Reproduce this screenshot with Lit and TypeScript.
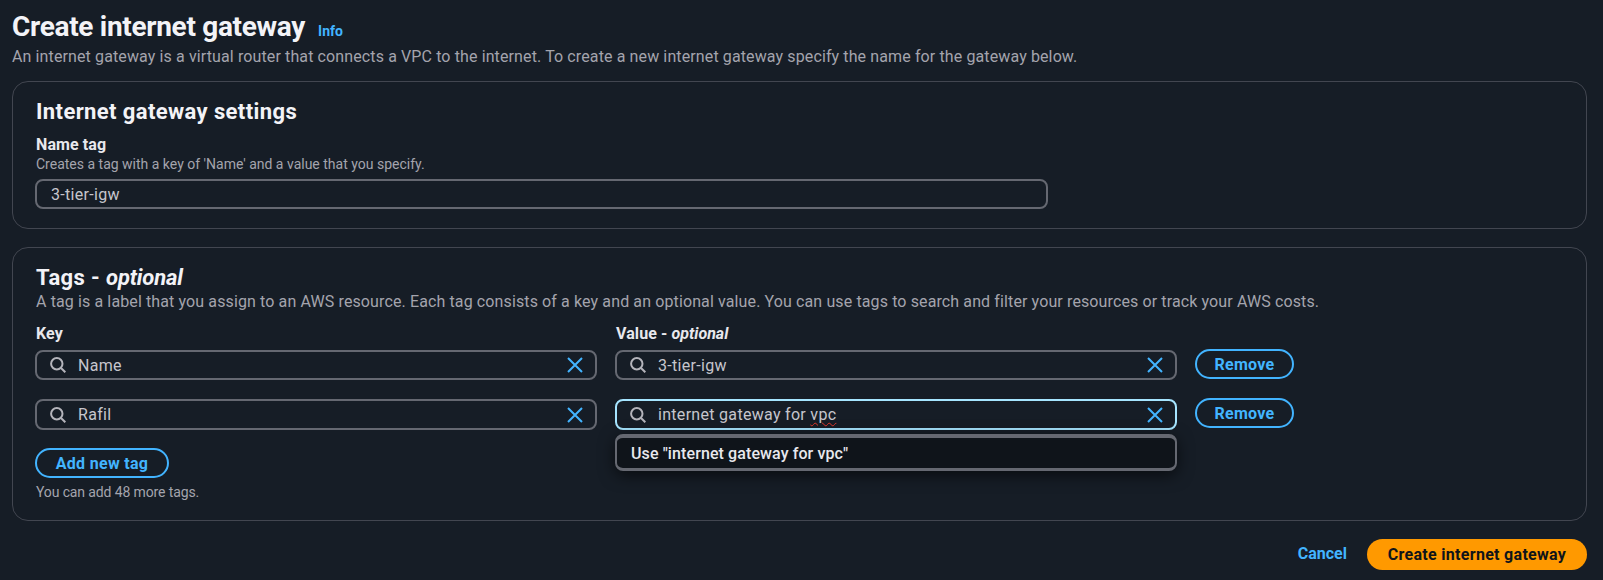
import { LitElement, html, css } from "lit";
import { customElement } from "lit/decorators.js";

const searchIcon = html`<svg class="search" viewBox="0 0 16 16" width="16" height="16" fill="none" stroke="#b4b4bb" stroke-width="2"><circle cx="6.8" cy="6.8" r="5.7"></circle><path d="M11 11l4.3 4.3"></path></svg>`;
const clearIcon = html`<svg class="clear" viewBox="0 0 16 16" width="16" height="16" fill="none" stroke="#42b4ff" stroke-width="2"><path d="M1 1l14 14M15 1L1 15"></path></svg>`;

@customElement("app-root")
export class AppRoot extends LitElement {
  static styles = css`
    :host {
      display: block;
      width: 1603px;
      height: 580px;
      overflow: hidden;
      background: #161d26;
      box-sizing: border-box;
      padding: 0 16px 0 12px;
      font-family: Roboto, "Noto Sans", sans-serif;
      font-size: 16px;
      color: #c6c6cd;
    }
    .title-row { display: flex; align-items: flex-start; height: 48px; padding-top: 10px; box-sizing: border-box; }
    h1 { margin: 0; font-size: 28px; line-height: 34px; font-weight: 700; color: #f3f3f7; letter-spacing: -0.31px; }
    .info { margin: 13px 0 0 13px; font-size: 14px; font-weight: 700; color: #42b4ff; }
    .desc { line-height: 18px; height: 18px; color: #a4a4ad; letter-spacing: 0.117px; white-space: nowrap; }
    .card {
      box-sizing: border-box;
      border: 1px solid #424650;
      border-radius: 16px;
      padding: 0 23px;
    }
    .settings { height: 148px; margin-top: 15px; padding-top: 18px; }
    .tags { height: 274px; margin-top: 18px; padding-top: 18px; }
    h2 { margin: 0; font-size: 22px; line-height: 24px; font-weight: 700; color: #f3f3f7; letter-spacing: 0.39px; }
    h2 em { font-weight: 700; font-style: italic; letter-spacing: -0.15px; }
    label em { font-weight: 700; font-style: italic; letter-spacing: 0; }
    label { display: block; font-size: 16px; line-height: 18px; font-weight: 700; color: #e8e8ed; letter-spacing: 0.1px; }
    .small { font-size: 14px; line-height: 16px; color: #a4a4ad; white-space: nowrap; }
    .settings label { margin-top: 12px; }
    .settings .small { margin-top: 2px; }
    .field {
      box-sizing: border-box;
      height: 30px;
      border: 2px solid #656871;
      border-radius: 8px;
      display: flex;
      align-items: center;
      color: #c6c6cd;
      font-size: 16px;
      letter-spacing: 0.3px;
      background: #161d26;
    }
    .plain { width: 1013px; margin: 7px 0 0 -1px; padding-left: 14px; }
    .tags .desc { margin-top: 3px; }
    .grid {
      display: grid;
      grid-template-columns: 562px 562px auto;
      column-gap: 18px;
      margin: 14px 0 0 -1px;
      justify-content: start;
      align-items: start;
    }
    .grid .rm { margin: -1px 0 0 0; }
    .head { height: 18px; margin: 0 0 7px 1px; }
    .row-gap { grid-column: 1 / -1; height: 19px; }
    .search-field { padding: 0 12px 0 13px; position: relative; }
    .search-field .value { margin-left: 12px; flex: 1; }
    .search { flex: none; }
    .clear { flex: none; }
    .tall { height: 31px; }
    .focus { border-color: #a6e5ff; color: #c6c6cd; position: relative; }
    .spell { text-decoration: underline wavy #e0362c 1px; text-underline-offset: 2px; }
    .cell { position: relative; }
    .menu {
      position: absolute;
      left: 0;
      right: 0;
      top: 35px;
      height: 37px;
      box-sizing: border-box;
      border: 2px solid #656871;
      border-top-width: 4px;
      border-bottom-width: 3px;
      border-radius: 8px;
      background: #0f141a;
      color: #e8e8ed;
      font-weight: 500;
      font-size: 16px;
      letter-spacing: 0.1px;
      padding-left: 14px;
      display: flex;
      align-items: center;
      box-shadow: 0 4px 16px rgba(0, 0, 0, 0.6);
      z-index: 2;
    }
    .btn {
      box-sizing: border-box;
      display: inline-flex;
      align-items: center;
      justify-content: center;
      height: 30px;
      border: 2px solid #42b4ff;
      border-radius: 20px;
      color: #42b4ff;
      font-weight: 700;
      font-size: 16px;
      letter-spacing: 0.3px;
    }
    .rm { width: 99px; }
    .add { width: 134px; margin: 18px 0 0 -1px; }
    .tags .small { margin-top: 6px; letter-spacing: -0.12px; }
    .footer {
      display: flex;
      justify-content: flex-end;
      align-items: center;
      margin-top: 18px;
    }
    .cancel { color: #42b4ff; font-weight: 700; margin-right: 20px; padding-bottom: 2px; }
    .primary {
      box-sizing: border-box;
      width: 220px;
      height: 31px;
      padding-bottom: 1px;
      border-radius: 20px;
      background: #ff9900;
      color: #0f141a;
      font-weight: 700;
      letter-spacing: 0.3px;
      display: flex;
      align-items: center;
      justify-content: center;
    }
  `;

  private sf(value: unknown, cls = "") {
    return html`<div class="field search-field ${cls}">${searchIcon}<span class="value">${value}</span>${clearIcon}</div>`;
  }

  render() {
    return html`
      <div class="title-row"><h1>Create internet gateway</h1><span class="info">Info</span></div>
      <div class="desc">An internet gateway is a virtual router that connects a VPC to the internet. To create a new internet gateway specify the name for the gateway below.</div>
      <section class="card settings">
        <h2>Internet gateway settings</h2>
        <label>Name tag</label>
        <div class="small">Creates a tag with a key of 'Name' and a value that you specify.</div>
        <div class="field plain">3-tier-igw</div>
      </section>
      <section class="card tags">
        <h2>Tags - <em>optional</em></h2>
        <div class="desc">A tag is a label that you assign to an AWS resource. Each tag consists of a key and an optional value. You can use tags to search and filter your resources or track your AWS costs.</div>
        <div class="grid">
          <label class="head">Key</label>
          <label class="head">Value - <em>optional</em></label>
          <span></span>
          ${this.sf("Name")}
          ${this.sf("3-tier-igw")}
          <div class="btn rm">Remove</div>
          <div class="row-gap"></div>
          ${this.sf("Rafil", "tall")}
          <div class="cell">
            ${this.sf(html`internet gateway for <span class="spell">vpc</span>`, "tall focus")}
            <div class="menu">Use "internet gateway for vpc"</div>
          </div>
          <div class="btn rm">Remove</div>
        </div>
        <div class="btn add">Add new tag</div>
        <div class="small">You can add 48 more tags.</div>
      </section>
      <div class="footer">
        <span class="cancel">Cancel</span>
        <div class="primary">Create internet gateway</div>
      </div>
    `;
  }
}
